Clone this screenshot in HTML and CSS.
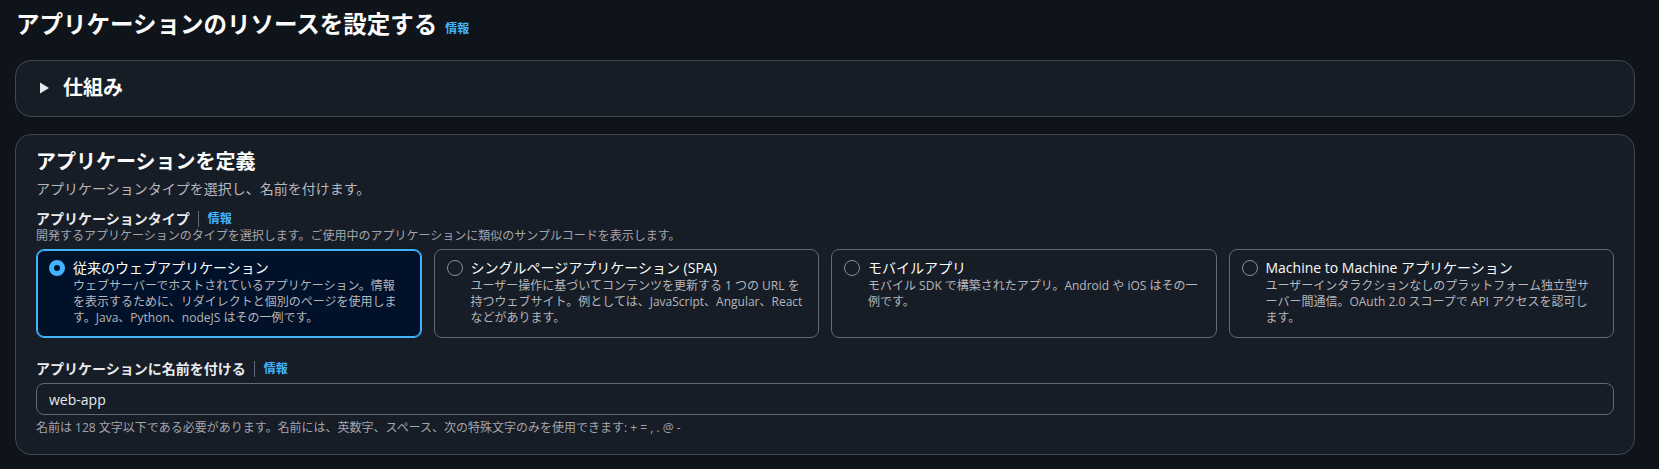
FILE: index.html
```html
<!DOCTYPE html>
<html lang="ja">
<head>
    <meta charset="UTF-8">
    <meta name="viewport" content="width=device-width, initial-scale=1.0">
    <title>アプリケーションのリソースを設定する</title>
    <link rel="stylesheet" href="styles.css">
</head>
<body>
    <main class="page">
        <h1 class="page-title">アプリケーションのリソースを設定する<a class="info" href="#">情報</a></h1>

        <section class="panel expander">
            <svg class="caret" width="16" height="16" viewBox="0 0 16 16" aria-hidden="true">
                <polygon points="4,2.5 4,13.5 13,8" fill="#e9ebed"/>
            </svg>
            <h2 class="expander-title">仕組み</h2>
        </section>

        <section class="panel">
            <h2 class="panel-title">アプリケーションを定義</h2>
            <p class="panel-desc">アプリケーションタイプを選択し、名前を付けます。</p>

            <div class="field">
                <div class="field-label">アプリケーションタイプ<span class="sep"></span><a class="info" href="#">情報</a></div>
                <div class="field-desc">開発するアプリケーションのタイプを選択します。ご使用中のアプリケーションに類似のサンプルコードを表示します。</div>
                <div class="tiles">
                    <div class="tile selected">
                        <span class="radio"></span>
                        <div class="tile-body">
                            <div class="tile-title">従来のウェブアプリケーション</div>
                            <div class="tile-desc">ウェブサーバーでホストされているアプリケーション。情報を表示するために、リダイレクトと個別のページを使用します。Java、Python、nodeJS はその一例です。</div>
                        </div>
                    </div>
                    <div class="tile">
                        <span class="radio"></span>
                        <div class="tile-body">
                            <div class="tile-title">シングルページアプリケーション (SPA)</div>
                            <div class="tile-desc">ユーザー操作に基づいてコンテンツを更新する 1 つの URL を持つウェブサイト。例としては、JavaScript、Angular、React などがあります。</div>
                        </div>
                    </div>
                    <div class="tile">
                        <span class="radio"></span>
                        <div class="tile-body">
                            <div class="tile-title">モバイルアプリ</div>
                            <div class="tile-desc">モバイル SDK で構築されたアプリ。Android や iOS はその一例です。</div>
                        </div>
                    </div>
                    <div class="tile">
                        <span class="radio"></span>
                        <div class="tile-body">
                            <div class="tile-title">Machine to Machine アプリケーション</div>
                            <div class="tile-desc">ユーザーインタラクションなしのプラットフォーム独立型サーバー間通信。OAuth 2.0 スコープで API アクセスを認可します。</div>
                        </div>
                    </div>
                </div>
            </div>

            <div class="field name-field">
                <div class="field-label">アプリケーションに名前を付ける<span class="sep"></span><a class="info" href="#">情報</a></div>
                <input class="text-input" type="text" value="web-app">
                <div class="field-hint">名前は 128 文字以下である必要があります。名前には、英数字、スペース、次の特殊文字のみを使用できます: + = , . @ -</div>
            </div>
        </section>
    </main>
</body>
</html>
```

FILE: styles.css
```css
body {
    margin: 0;
    background: #0f141a;
    color: #c6c6cd;
    font-family: 'Open Sans', 'Noto Sans CJK JP', sans-serif;
}

.page {
    padding: 8px 24px 20px 15px;
}

.page-title {
    margin: 0;
    font-size: 23.5px;
    line-height: 32px;
    font-weight: 700;
    color: #fbfbfb;
    padding-left: 1px;
}

.info {
    color: #42b4ff;
    font-size: 12px;
    font-weight: 700;
    text-decoration: none;
}

.page-title .info {
    margin-left: 8px;
}

.panel {
    background: #161d26;
    border: 1px solid #424650;
    border-radius: 16px;
    padding: 13px 20px 18px;
}

.expander {
    margin-top: 15px;
    padding: 13px 20px 14px;
    display: flex;
    align-items: center;
    gap: 11px;
}

.caret {
    flex: none;
}

.expander-title {
    margin: 0;
    font-size: 20px;
    line-height: 28px;
    font-weight: 700;
    color: #fbfbfb;
}

.expander + .panel {
    margin-top: 17px;
}

.panel-title {
    margin: 0;
    font-size: 20px;
    line-height: 28px;
    font-weight: 700;
    color: #fbfbfb;
}

.panel-desc {
    margin: 3px 0 0;
    font-size: 14px;
    line-height: 20px;
    color: #b6b6bd;
}

.field {
    margin-top: 11px;
}

.field-label {
    display: flex;
    align-items: center;
    font-size: 14px;
    line-height: 18px;
    font-weight: 700;
    color: #e9ebed;
}

.sep {
    width: 1px;
    height: 16px;
    background: #5f6b7a;
    margin: 0 9px 0 8px;
}

.field-desc,
.field-hint {
    font-size: 12px;
    line-height: 16px;
    color: #a4a4ad;
}

.tiles {
    margin-top: 5px;
    display: grid;
    grid-template-columns: repeat(4, 1fr);
    gap: 12px;
}

.tile {
    display: flex;
    gap: 8px;
    border: 1px solid #656871;
    border-radius: 8px;
    padding: 8px 14px 11px 12px;
}

.tile.selected {
    background: #001129;
    border-color: #42b4ff;
    box-shadow: inset 0 0 0 1px #42b4ff;
}

.radio {
    flex: none;
    box-sizing: border-box;
    width: 16px;
    height: 16px;
    margin-top: 2px;
    border: 1.5px solid #8c8c94;
    border-radius: 50%;
}

.tile.selected .radio {
    border: 5px solid #42b4ff;
}

.tile-title {
    font-size: 14px;
    line-height: 20px;
    color: #fbfbfb;
}

.tile-desc {
    font-size: 12px;
    line-height: 16px;
    color: #b6b6bd;
}

.name-field {
    margin-top: 22px;
}

.text-input {
    display: block;
    box-sizing: border-box;
    width: 100%;
    height: 32px;
    margin-top: 5px;
    padding: 0 12px;
    background: #161d26;
    border: 1px solid #656871;
    border-radius: 8px;
    color: #e9ebed;
    font-family: inherit;
    font-size: 14px;
    outline: none;
}

.field-hint {
    margin-top: 5px;
}
```
